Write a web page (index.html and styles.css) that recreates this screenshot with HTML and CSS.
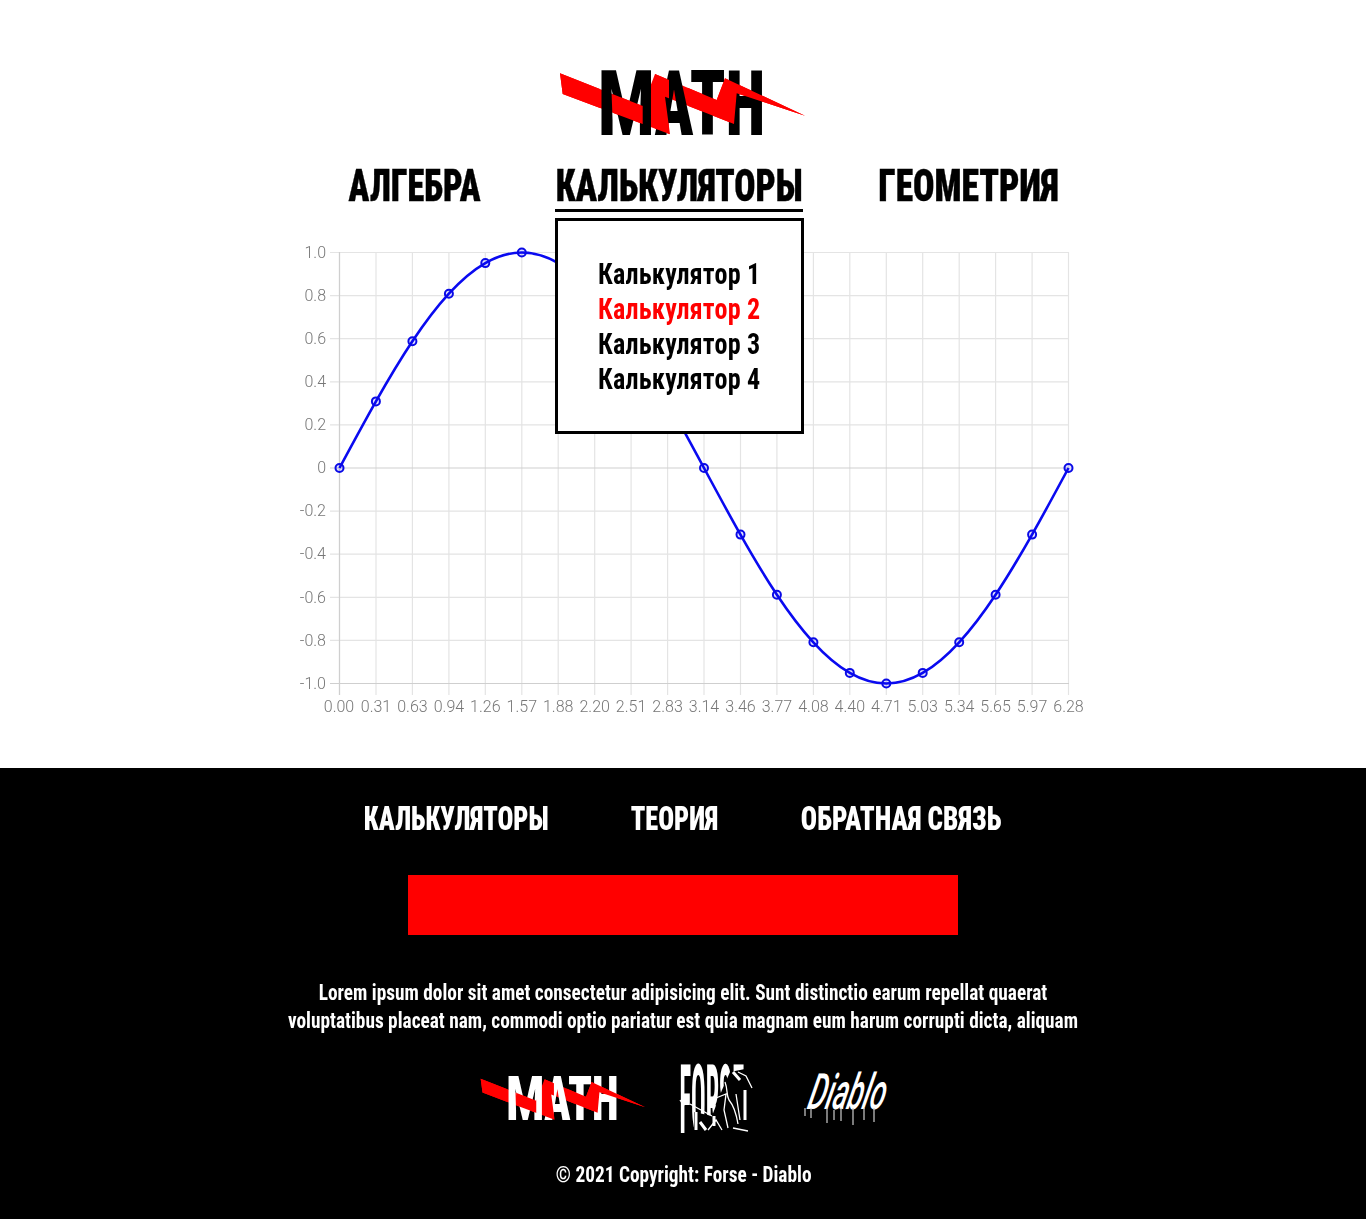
FILE: index.html
```html
<!DOCTYPE html>
<html lang="ru">
<head>
<meta charset="utf-8">
<title>Math</title>
<link rel="stylesheet" href="styles.css">
</head>
<body>
<svg class="defs" width="0" height="0" aria-hidden="true">
  <defs>
    <clipPath id="bolt-front">
      <rect x="500" y="60" width="100" height="90"/>
      <rect x="613" y="60" width="29.7" height="90"/>
      <rect x="655" y="60" width="14" height="90"/>
      <rect x="688" y="60" width="130" height="90"/>
    </clipPath>
    <polygon id="bolt" points="560,73.3 642.7,106 655,74 716.7,100 725,78.3 805,115.7 736.7,93.3 734,124 665,96.7 670,134.3 562.7,94"/>
    <symbol id="logo" viewBox="559 70 247 67">
      <use href="#bolt" class="bolt"/>
      <text class="logo-word" x="598" y="135" textLength="167" lengthAdjust="spacingAndGlyphs"><tspan class="logo-m">M</tspan>ATH</text>
      <use href="#bolt" class="bolt" clip-path="url(#bolt-front)"/>
    </symbol>
  </defs>
</svg>
<header class="top">
  <svg class="logo-main" aria-label="Math"><use href="#logo"/></svg>
  <nav class="main-nav">
    <a class="main-item w-alg"><span>АЛГЕБРА</span></a>
    <div class="main-item w-calc active">
      <span>КАЛЬКУЛЯТОРЫ</span>
      <ul class="menu">
        <li><span>Калькулятор 1</span></li>
        <li class="hot"><span>Калькулятор 2</span></li>
        <li><span>Калькулятор 3</span></li>
        <li><span>Калькулятор 4</span></li>
      </ul>
    </div>
    <a class="main-item w-geo"><span>ГЕОМЕТРИЯ</span></a>
  </nav>
  <svg class="chart" viewBox="273 240 820 480" role="img" aria-label="График синуса">
    <path class="grid" d="M339.5 252V695M376 252V695M412.4 252V695M448.9 252V695M485.3 252V695M521.8 252V695M558.2 252V695M594.7 252V695M631.1 252V695M667.6 252V695M704 252V695M740.5 252V695M776.9 252V695M813.4 252V695M849.8 252V695M886.3 252V695M922.7 252V695M959.2 252V695M995.6 252V695M1032.1 252V695M1068.5 252V695"/>
    <path class="grid" d="M330 252.5H1069M330 295.6H1069M330 338.7H1069M330 381.8H1069M330 424.9H1069M330 511.1H1069M330 554.2H1069M330 597.3H1069M330 640.4H1069"/>
    <path class="axis" d="M330 468H1069M330 683.5H1069M339.5 252V695"/>
    <g class="ylab">
      <text x="326" y="258">1.0</text><text x="326" y="301">0.8</text><text x="326" y="344">0.6</text><text x="326" y="387">0.4</text><text x="326" y="430">0.2</text><text x="326" y="473">0</text><text x="326" y="516">-0.2</text><text x="326" y="559">-0.4</text><text x="326" y="603">-0.6</text><text x="326" y="646">-0.8</text><text x="326" y="689">-1.0</text>
    </g>
    <g class="xlab">
      <text x="339" y="712">0.00</text><text x="376" y="712">0.31</text><text x="412.4" y="712">0.63</text><text x="448.9" y="712">0.94</text><text x="485.3" y="712">1.26</text><text x="521.8" y="712">1.57</text><text x="558.2" y="712">1.88</text><text x="594.7" y="712">2.20</text><text x="631.1" y="712">2.51</text><text x="667.6" y="712">2.83</text><text x="704" y="712">3.14</text><text x="740.5" y="712">3.46</text><text x="776.9" y="712">3.77</text><text x="813.4" y="712">4.08</text><text x="849.8" y="712">4.40</text><text x="886.3" y="712">4.71</text><text x="922.7" y="712">5.03</text><text x="959.2" y="712">5.34</text><text x="995.6" y="712">5.65</text><text x="1032.1" y="712">5.97</text><text x="1068.5" y="712">6.28</text>
    </g>
    <path class="curve" d="M339.5 468c12.15,-22.57 24.3,-45.14 36.45,-66.6c12.15,-21.46 24.3,-41.84 36.45,-60.1c12.15,-18.26 24.3,-34.33 36.45,-47.6c12.15,-13.27 24.3,-23.63 36.45,-30.6c12.15,-6.97 24.3,-10.6 36.45,-10.6c12.15,0 24.3,3.63 36.45,10.6c12.15,6.97 24.3,17.33 36.45,30.6c12.15,13.27 24.3,29.34 36.45,47.6c12.15,18.26 24.3,38.64 36.45,60.1c12.15,21.46 24.3,44.03 36.45,66.6c12.15,22.57 24.3,45.14 36.45,66.6c12.15,21.46 24.3,41.84 36.45,60.1c12.15,18.26 24.3,34.33 36.45,47.6c12.15,13.27 24.3,23.63 36.45,30.6c12.15,6.97 24.3,10.6 36.45,10.6c12.15,0 24.3,-3.63 36.45,-10.6c12.15,-6.97 24.3,-17.33 36.45,-30.6c12.15,-13.27 24.3,-29.34 36.45,-47.6c12.15,-18.26 24.3,-38.64 36.45,-60.1c12.15,-21.46 24.3,-44.03 36.45,-66.6"/>
    <g class="dots">
      <circle cx="339.5" cy="468" r="4"/><circle cx="375.9" cy="401.4" r="4"/><circle cx="412.4" cy="341.3" r="4"/><circle cx="448.9" cy="293.7" r="4"/><circle cx="485.3" cy="263.1" r="4"/><circle cx="521.8" cy="252.5" r="4"/><circle cx="704" cy="468" r="4"/><circle cx="740.5" cy="534.6" r="4"/><circle cx="776.9" cy="594.7" r="4"/><circle cx="813.4" cy="642.3" r="4"/><circle cx="849.8" cy="672.9" r="4"/><circle cx="886.3" cy="683.5" r="4"/><circle cx="922.7" cy="672.9" r="4"/><circle cx="959.2" cy="642.3" r="4"/><circle cx="995.6" cy="594.7" r="4"/><circle cx="1032.1" cy="534.6" r="4"/><circle cx="1068.5" cy="468" r="4"/>
    </g>
  </svg>
</header>
<footer class="bottom">
  <nav class="foot-nav">
    <a class="foot-item w-f1"><span>КАЛЬКУЛЯТОРЫ</span></a>
    <a class="foot-item w-f2"><span>ТЕОРИЯ</span></a>
    <a class="foot-item w-f3"><span>ОБРАТНАЯ СВЯЗЬ</span></a>
  </nav>
  <div class="red-bar"></div>
  <p class="lorem">Lorem ipsum dolor sit amet consectetur adipisicing elit. Sunt distinctio earum repellat quaerat<br>voluptatibus placeat nam, commodi optio pariatur est quia magnam eum harum corrupti dicta, aliquam</p>
  <div class="brands">
    <svg class="logo-foot" aria-label="Math"><use href="#logo"/></svg>
    <svg class="forse" viewBox="680 1064 73 70" aria-label="Forse">
      <text class="forse-word" transform="translate(679.5 1133) scale(.25 1)">FORSE</text>
      <path class="forse-mask" d="M722 1090L730 1072L745 1069L753 1072V1134H694V1112L712 1116Z"/>
      <path class="forse-ink" d="M680 1100L684 1106M690 1104L712 1116M725 1082C728 1090 726 1094 729 1100C734 1106 736 1112 738 1124M716 1098L726 1094L724 1110L728 1128M736 1094L740 1120M708 1130L716 1120L722 1130M733 1128L748 1131M738 1072L746 1076L752 1088"/>
      <path class="forse-bars" d="M696 1112V1130M714 1116V1126M745 1090V1120M733 1072L740 1080M700 1122L706 1130"/>
    </svg>
    <svg class="diablo" viewBox="803 1072 85 54" aria-label="Diablo">
      <text class="diablo-word" transform="translate(805 1109) skewX(-14) scale(.56 1)">Diablo</text>
      <path class="drips" d="M804 1108V1116M810 1108V1118M826 1108V1123M833 1110V1120M840 1108V1121M852 1108V1125M863 1108V1120M873 1108V1122"/>
    </svg>
  </div>
  <p class="copy">© 2021 Copyright: Forse - Diablo</p>
</footer>
</body>
</html>
```
FILE: styles.css
```css
* { box-sizing: border-box; }
html, body { margin: 0; padding: 0; background: #fff; }
body { font-family: Roboto, "Open Sans", sans-serif; font-stretch: 75%; color: #000; }
.defs { position: absolute; }
.bolt { fill: #f00; }
.logo-word { font-family: Roboto, sans-serif; font-stretch: 75%; font-weight: 900; font-size: 90px; fill: currentColor; }
.logo-m { font-stretch: 100%; }

.top { height: 768px; padding-top: 70px; display: flex; flex-direction: column; }
.logo-main { display: block; width: 247px; height: 67px; margin-left: 559px; color: #000; }
.main-nav { display: flex; gap: 75px; padding-left: 349px; margin-top: 24px; }
.main-item { position: relative; height: 51px; line-height: 50px; font-size: 44px; font-weight: 900; display: flex; justify-content: center; white-space: nowrap; color: #000; -webkit-text-stroke: .4px #000; }
.main-item > span { display: block; transform: scaleX(.78); }
.w-alg { width: 131px; }
.w-calc { width: 248px; }
.w-calc > span { transform: scaleX(.8); }
.w-geo { width: 180px; }
.w-geo > span { transform: scaleX(.81); }
.active { border-bottom: 3px solid #000; }
.menu { position: absolute; top: 57px; left: 0; width: 249px; height: 216px; margin: 0; padding: 35px 0 0 40px; list-style: none; background: #fff; border: 3px solid #000; z-index: 2; font-size: 29.8px; line-height: 35px; font-weight: 700; -webkit-text-stroke: 0; }
.menu span { display: block; letter-spacing: .25px; transform: scaleX(.875); transform-origin: 0 50%; }
.hot { color: #f00; }

.chart { display: block; width: 820px; height: 480px; margin: 28px 0 0 273px; filter: blur(.3px); }
.grid { fill: none; stroke: #e4e4e4; stroke-width: 1.2; }
.axis { fill: none; stroke: #cfcfcf; stroke-width: 1.2; }
.ylab text, .xlab text { font-family: Roboto, "Liberation Sans", sans-serif; font-stretch: 100%; font-weight: 300; font-size: 16px; fill: #777; }
.ylab { text-anchor: end; }
.xlab { text-anchor: middle; }
.curve { fill: none; stroke: #0a0af0; stroke-width: 2.6; }
.dots circle { fill: #00f; fill-opacity: .12; stroke: #0a0ae6; stroke-width: 2; }

.bottom { height: 451px; padding-top: 29px; background: #000; color: #fff; display: flex; flex-direction: column; align-items: center; }
.foot-nav { display: flex; gap: 82px; }
.foot-item { height: 40px; line-height: 42px; font-size: 34px; font-weight: 900; display: flex; justify-content: center; white-space: nowrap; color: #fff; }
.foot-item > span { display: block; transform: scaleX(.775); }
.w-f1 { width: 184px; }
.w-f2 { width: 89px; }
.w-f3 { width: 201px; }
.w-f3 > span { transform: scaleX(.795); }
.red-bar { width: 550px; height: 60px; margin-top: 38px; background: #f00; flex: none; }
.lorem { width: 1200px; margin: 44px 0 0; font-size: 22px; line-height: 28px; font-weight: 700; text-align: center; transform: scaleX(.878); flex: none; }
.brands { display: flex; align-items: center; gap: 34px; margin-top: 29px; flex: none; height: 70px; padding-left: 2px; }
.logo-foot { display: block; width: 166px; height: 46px; color: #fff; }
.forse { display: block; width: 73px; height: 70px; margin-right: 17px; overflow: visible; }
.forse-word { font-family: Roboto, sans-serif; font-stretch: 75%; font-weight: 700; font-size: 97px; fill: #fff; }
.forse-mask { fill: #000; }
.forse-ink { fill: none; stroke: #fff; stroke-width: 1.3; }
.forse-bars { fill: none; stroke: #fff; stroke-width: 3; }
.diablo { display: block; width: 85px; height: 54px; overflow: visible; }
.diablo-word { font-family: Roboto, sans-serif; font-stretch: 100%; font-style: italic; font-weight: 500; font-size: 50px; fill: #fff; }
.drips { fill: none; stroke: #ccc; stroke-width: 1.2; }
.copy { margin: 26px 0 0 1px; font-size: 22px; line-height: 30px; font-weight: 700; white-space: nowrap; transform: scaleX(.878); flex: none; }
```
